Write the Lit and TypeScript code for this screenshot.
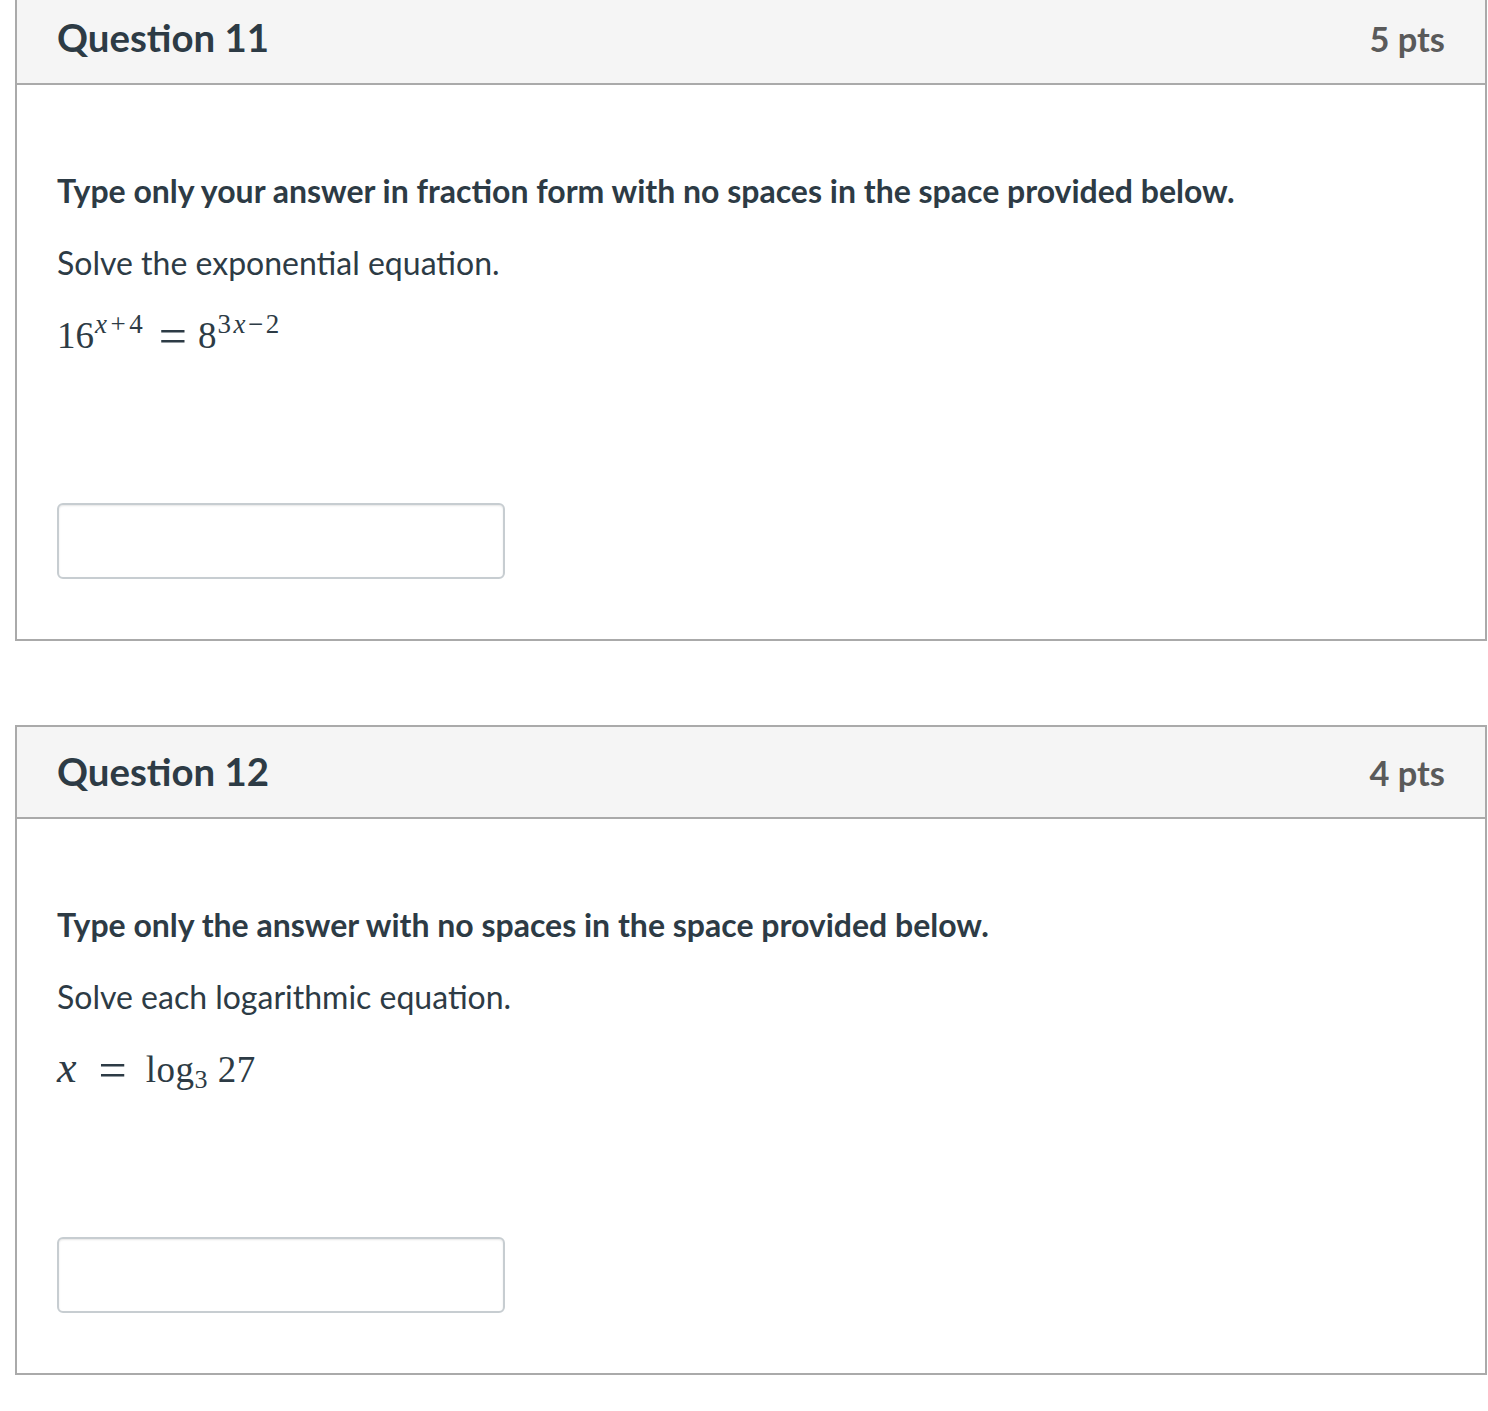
import { LitElement, html, css } from "lit";
import { customElement } from "lit/decorators.js";

@customElement("quiz-question")
export class QuizQuestion extends LitElement {
  static properties = {
    title: {},
    points: {},
    lead: {},
    prompt: {},
  };
  title = "";
  points = "";
  lead = "";
  prompt = "";

  static styles = css`
    :host {
      display: block;
    }

    .card {
      border: 2px solid #aaaaaa;
      background: #fff;
      height: 650px;
      box-sizing: border-box;
      display: flex;
      flex-direction: column;
    }

    .head {
      height: 92px;
      box-sizing: border-box;
      background: #f5f5f5;
      border-bottom: 2px solid #aaaaaa;
      padding: 0 40px 0 40px;
      display: flex;
      justify-content: space-between;
      align-items: center;
    }

    .title {
      font-size: 38.4px;
      font-weight: 700;
      color: #2d3b45;
      padding-bottom: 2px;
    }

    .pts {
      font-size: 34.4px;
      font-weight: 700;
      color: #5a5a5a;
    }

    .body {
      padding: 86px 40px 0;
      color: #2d3b45;
      font-size: 32px;
      line-height: 40px;
    }

    .lead {
      font-weight: 700;
    }

    .prompt {
      margin-top: 32px;
    }

    .math {
      margin-top: 30px;
      height: 46px;
      font-family: "Liberation Serif", serif;
      font-size: 37px;
      line-height: 46px;
      display: flex;
      align-items: baseline;
    }

    .answer {
      display: block;
      margin-top: 144px;
      width: 448px;
      height: 76px;
      box-sizing: border-box;
      border: 2px solid #c7cdd1;
      border-radius: 6px;
      background: #fff;
      box-shadow: inset 0 1px 2px rgba(0, 0, 0, 0.1);
    }
  `;

  render() {
    return html`
      <div class="card">
        <div class="head">
          <span class="title">${this.title}</span>
          <span class="pts">${this.points}</span>
        </div>
        <div class="body">
          <div class="lead">${this.lead}</div>
          <div class="prompt">${this.prompt}</div>
          <div class="math"><slot></slot></div>
          <input class="answer" type="text" />
        </div>
      </div>
    `;
  }
}

@customElement("app-root")
export class AppRoot extends LitElement {
  static styles = css`
    :host {
      display: block;
      font-family: Lato, "Open Sans", sans-serif;
      background: #fff;
      min-height: 1411px;
      overflow: hidden;
    }

    .page {
      display: flex;
      flex-direction: column;
      gap: 84px;
      margin: -9px 1px 0 15px;
    }

    i {
      font-style: italic;
    }

    .var {
      font-size: 44px;
      line-height: 0;
    }

    .sup {
      font-size: 27px;
      letter-spacing: 3.5px;
      position: relative;
      top: -15px;
      margin-left: 1px;
    }

    .sup-tight {
      letter-spacing: 2.5px;
    }

    .sub {
      font-size: 26px;
      position: relative;
      top: 6px;
    }

    .log {
      letter-spacing: 0.5px;
    }

    .eq {
      font-size: 50px;
      line-height: 0;
      position: relative;
      top: 5px;
    }

    .eq-a {
      margin: 0 11px 0 12.5px;
    }

    .eq-b {
      margin: 0 19px 0 22px;
    }
  `;

  render() {
    return html`
      <div class="page">
        <quiz-question
          title="Question 11"
          points="5 pts"
          lead="Type only your answer in fraction form with no spaces in the space provided below."
          prompt="Solve the exponential equation."
        >
          <span>16<span class="sup"><i>x</i>+4</span></span>
          <span class="eq eq-a">=</span>
          <span>8<span class="sup sup-tight">3<i>x</i>−2</span></span>
        </quiz-question>
        <quiz-question
          title="Question 12"
          points="4 pts"
          lead="Type only the answer with no spaces in the space provided below."
          prompt="Solve each logarithmic equation."
        >
          <i class="var">x</i>
          <span class="eq eq-b">=</span>
          <span class="log">log<span class="sub">3</span> 27</span>
        </quiz-question>
      </div>
    `;
  }
}
